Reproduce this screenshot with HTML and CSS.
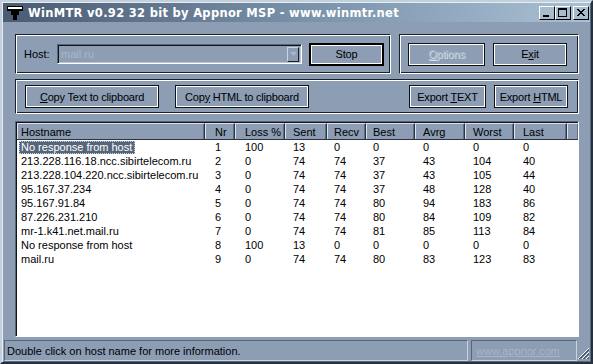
FILE: index.html
```html
<!DOCTYPE html>
<html>
<head>
<meta charset="utf-8">
<title>WinMTR</title>
<link rel="stylesheet" href="styles.css">
</head>
<body>
<div class="win">
  <div class="titlebar">
    <svg class="appicon" width="16" height="14" viewBox="0 0 16 14">
      <rect x="0" y="0" width="16" height="5" fill="#000"/>
      <rect x="1" y="1" width="14" height="2" fill="#fff"/>
      <rect x="4" y="5" width="8" height="4" fill="#000"/>
      <rect x="6" y="9" width="4" height="5" fill="#000"/>
    </svg>
    <span class="title">WinMTR v0.92 32 bit by Appnor MSP - www.winmtr.net</span>
    <div class="capbtns">
      <span class="capbtn"><svg width="16" height="14" viewBox="0 0 16 14"><rect x="4" y="9" width="6" height="2" fill="#000"/></svg></span>
      <span class="capbtn"><svg width="16" height="14" viewBox="0 0 16 14"><rect x="3.5" y="2.5" width="8" height="8" fill="none" stroke="#000"/><rect x="3" y="2" width="9" height="2" fill="#000"/></svg></span>
      <span class="capbtn close"><svg width="16" height="14" viewBox="0 0 16 14"><path d="M4 3 L11 10 M5 3 L12 10 M11 3 L4 10 M12 3 L5 10" stroke="#000" stroke-width="1"/></svg></span>
    </div>
  </div>
  <div class="client">
    <div class="toprow">
      <div class="group g1">
        <span class="label">Host:</span>
        <div class="combo">
          <span class="combo-text">mail.ru</span>
          <span class="combo-arrow"><svg width="7" height="4" viewBox="0 0 7 4"><path d="M0 0 H7 L3.5 4 Z" fill="#a9b8c8"/></svg></span>
        </div>
        <button class="btn stop">Stop</button>
      </div>
      <div class="group g2">
        <button class="btn w77 disabled"><u>O</u>ptions</button>
        <button class="btn w74">E<u>x</u>it</button>
      </div>
    </div>
    <div class="group g3">
      <button class="btn w133"><u>C</u>opy Text to clipboard</button>
      <button class="btn w133">Cop<u>y</u> HTML to clipboard</button>
      <span class="spacer"></span>
      <button class="btn w77">Export <u>T</u>EXT</button>
      <button class="btn w74">Export <u>H</u>TML</button>
    </div>
    <div class="list">
      <div class="row head">
        <span class="c c1">Hostname</span><span class="c c2">Nr</span><span class="c c3">Loss %</span><span class="c c4">Sent</span><span class="c c5">Recv</span><span class="c c6">Best</span><span class="c c7">Avrg</span><span class="c c8">Worst</span><span class="c c9">Last</span><span class="c c10"></span>
      </div>
      <div class="row"><span class="c c1"><span class="sel">No response from host</span></span><span class="c c2">1</span><span class="c c3">100</span><span class="c c4">13</span><span class="c c5">0</span><span class="c c6">0</span><span class="c c7">0</span><span class="c c8">0</span><span class="c c9">0</span></div>
      <div class="row"><span class="c c1">213.228.116.18.ncc.sibirtelecom.ru</span><span class="c c2">2</span><span class="c c3">0</span><span class="c c4">74</span><span class="c c5">74</span><span class="c c6">37</span><span class="c c7">43</span><span class="c c8">104</span><span class="c c9">40</span></div>
      <div class="row"><span class="c c1">213.228.104.220.ncc.sibirtelecom.ru</span><span class="c c2">3</span><span class="c c3">0</span><span class="c c4">74</span><span class="c c5">74</span><span class="c c6">37</span><span class="c c7">43</span><span class="c c8">105</span><span class="c c9">44</span></div>
      <div class="row"><span class="c c1">95.167.37.234</span><span class="c c2">4</span><span class="c c3">0</span><span class="c c4">74</span><span class="c c5">74</span><span class="c c6">37</span><span class="c c7">48</span><span class="c c8">128</span><span class="c c9">40</span></div>
      <div class="row"><span class="c c1">95.167.91.84</span><span class="c c2">5</span><span class="c c3">0</span><span class="c c4">74</span><span class="c c5">74</span><span class="c c6">80</span><span class="c c7">94</span><span class="c c8">183</span><span class="c c9">86</span></div>
      <div class="row"><span class="c c1">87.226.231.210</span><span class="c c2">6</span><span class="c c3">0</span><span class="c c4">74</span><span class="c c5">74</span><span class="c c6">80</span><span class="c c7">84</span><span class="c c8">109</span><span class="c c9">82</span></div>
      <div class="row"><span class="c c1">mr-1.k41.net.mail.ru</span><span class="c c2">7</span><span class="c c3">0</span><span class="c c4">74</span><span class="c c5">74</span><span class="c c6">81</span><span class="c c7">85</span><span class="c c8">113</span><span class="c c9">84</span></div>
      <div class="row"><span class="c c1">No response from host</span><span class="c c2">8</span><span class="c c3">100</span><span class="c c4">13</span><span class="c c5">0</span><span class="c c6">0</span><span class="c c7">0</span><span class="c c8">0</span><span class="c c9">0</span></div>
      <div class="row"><span class="c c1">mail.ru</span><span class="c c2">9</span><span class="c c3">0</span><span class="c c4">74</span><span class="c c5">74</span><span class="c c6">80</span><span class="c c7">83</span><span class="c c8">123</span><span class="c c9">83</span></div>
    </div>
  </div>
  <div class="status">
    <span class="panel main">Double click on host name for more information.</span>
    <span class="panel link"><a>www.appnor.com</a></span>
    <svg class="grip" width="13" height="13" viewBox="0 0 13 13">
      <path d="M12 1 L1 12 M12 5 L5 12 M12 9 L9 12" stroke="#fff" stroke-width="1"/>
      <path d="M12 2 L2 12 M12 3 L3 12 M12 6 L6 12 M12 7 L7 12 M12 10 L10 12 M12 11 L11 12" stroke="#4d5c6f" stroke-width="1"/>
    </svg>
  </div>
</div>
</body>
</html>
```

FILE: styles.css
```css
html, body {
  margin: 0;
  padding: 0;
  background: #8c9db4;
}
body {
  font-family: "Liberation Sans", Arial, sans-serif;
  font-size: 11px;
  color: #000;
}
.win {
  width: 593px;
  height: 364px;
  box-sizing: border-box;
  background: #8c9db4;
  border: 2px solid;
  border-color: #c3cfdb #27313d #27313d #c3cfdb;
  box-shadow: inset 1px 1px 0 #e6edf3, inset -1px -1px 0 #5a6a7f;
  padding: 1px;
  display: flex;
  flex-direction: column;
}
.titlebar {
  height: 19px;
  background: linear-gradient(to right, #4a5b72 0%, #7890a8 50%, #a9c0d4 100%);
  display: flex;
  align-items: center;
  padding-left: 4px;
  flex-shrink: 0;
}
.appicon { flex-shrink: 0; margin-right: 5px; }
.title {
  font-family: "DejaVu Sans", Verdana, sans-serif;
  font-weight: bold;
  font-size: 11.5px;
  color: #fff;
  white-space: nowrap;
  letter-spacing: 0.3px;
}
.capbtns {
  margin-left: auto;
  display: flex;
  margin-right: 1px;
}
.capbtn {
  width: 16px;
  height: 14px;
  box-sizing: border-box;
  background: #a9bccd;
  border: 1px solid;
  border-color: #fff #000 #000 #fff;
  display: block;
  overflow: hidden;
}
.capbtn svg { display: block; margin: -1px 0 0 -1px; }
.capbtn.close { margin-left: 2px; }
.client {
  flex: 1;
  padding: 12px 0 0 12px;
  display: flex;
  flex-direction: column;
}
.toprow {
  display: flex;
  gap: 8px;
  width: 564px;
}
.group {
  box-sizing: border-box;
  border: 1px solid;
  border-color: #1b2128 #fff #fff #1b2128;
  box-shadow: inset 1px 1px 0 #fff, inset -1px -1px 0 #1b2128;
  display: flex;
  align-items: center;
}
.g1 {
  width: 376px;
  height: 40px;
  padding-left: 8px;
}
.g2 {
  width: 180px;
  height: 40px;
  padding-left: 8px;
  gap: 8px;
}
.g3 {
  margin-top: 5px;
  width: 564px;
  height: 35px;
  padding: 0 10px 0 9px;
  gap: 16px;
}
.g3 .btn + .btn:last-child { margin-left: -8px; }
.spacer { flex: 1; }
.label { width: 33px; }
.combo {
  width: 245px;
  height: 20px;
  box-sizing: border-box;
  border: 1px solid;
  border-color: #55657a #fff #fff #55657a;
  box-shadow: inset 1px 1px 0 #12161b, inset -1px -1px 0 #b9c7d5;
  display: flex;
  align-items: center;
  padding: 0 2px 0 2px;
  margin-right: 7px;
}
.combo-text {
  flex: 1;
  color: #a9b8c8;
  padding-left: 1px;
}
.combo-arrow {
  width: 12px;
  height: 15px;
  box-sizing: border-box;
  border: 1px solid;
  border-color: #c9d4df #1b2128 #1b2128 #c9d4df;
  display: flex;
  align-items: center;
  justify-content: center;
}
.btn {
  font-family: "Liberation Sans", Arial, sans-serif;
  font-size: 11px;
  letter-spacing: -0.2px;
  color: #000;
  background: #8c9db4;
  border: 1px solid #101418;
  box-shadow: inset 0 0 0 1px #fff;
  height: 23px;
  padding: 0;
  margin: 0;
  flex-shrink: 0;
}
.btn u { text-decoration: underline; text-underline-offset: 1px; }
.stop {
  width: 75px;
  height: 23px;
  border: 2px solid #000;
  box-shadow: inset 0 0 0 1px #fff;
}
.w77 { width: 77px; }
.w74 { width: 74px; }
.w133 { width: 134px; height: 23px; }
.disabled {
  color: #a7b6c7;
  text-shadow: 1px 1px 0 #d6dfe8;
}
.list {
  margin-top: 7px;
  width: 564px;
  height: 216px;
  box-sizing: border-box;
  background: #fff;
  border: 1px solid;
  border-color: #55657a #fff #fff #55657a;
  box-shadow: inset 1px 1px 0 #10151b;
  padding: 1px 0 0 1px;
  display: flex;
  flex-direction: column;
}
.row {
  display: grid;
  grid-template-columns: 188px 30px 50px 42px 39px 49px 50px 49px 53px 1fr;
  height: 14px;
  line-height: 14px;
  white-space: nowrap;
}
.row.head {
  height: 17px;
  line-height: 16px;
  background: #8c9db4;
  margin-bottom: 0;
}
.head .c {
  box-sizing: border-box;
  border-top: 1px solid #dbe3eb;
  border-right: 1px solid #2a333f;
  box-shadow: inset -1px 0 0 #5d6d82, inset 1px 0 0 #dbe3eb;
  border-bottom: 1px solid #2a333f;
}
.head .c10 { border-right: none; }
.c { overflow: hidden; }
.c1 { padding-left: 4px; }
.c2 { padding-left: 10px; }
.c3 { padding-left: 10px; }
.c4 { padding-left: 8px; }
.c5 { padding-left: 7px; }
.c6 { padding-left: 7px; }
.c7 { padding-left: 8px; }
.c8 { padding-left: 8px; }
.c9 { padding-left: 9px; }
.sel {
  display: inline-block;
  background: #55667a;
  color: #fff;
  outline: 1px dotted #c9d3dd;
  outline-offset: -1px;
  padding: 0 3px 0 2px;
  margin-left: -2px;
  line-height: 13px;
}
.status {
  height: 21px;
  margin-top: 3px;
  display: flex;
  align-items: stretch;
  flex-shrink: 0;
  padding-left: 1px;
}
.panel {
  box-sizing: border-box;
  border: 1px solid;
  border-color: #55657a #c9d4df #c9d4df #55657a;
  display: flex;
  align-items: center;
  padding-left: 2px;
  white-space: nowrap;
}
.panel.main { width: 464px; }
.panel.link {
  width: 106px;
  margin-left: 3px;
  padding-left: 4px;
}
.panel.link a {
  color: #a8b6c6;
  text-decoration: underline;
}
.grip {
  margin-left: auto;
  align-self: flex-end;
  margin-bottom: 1px;
}
```
